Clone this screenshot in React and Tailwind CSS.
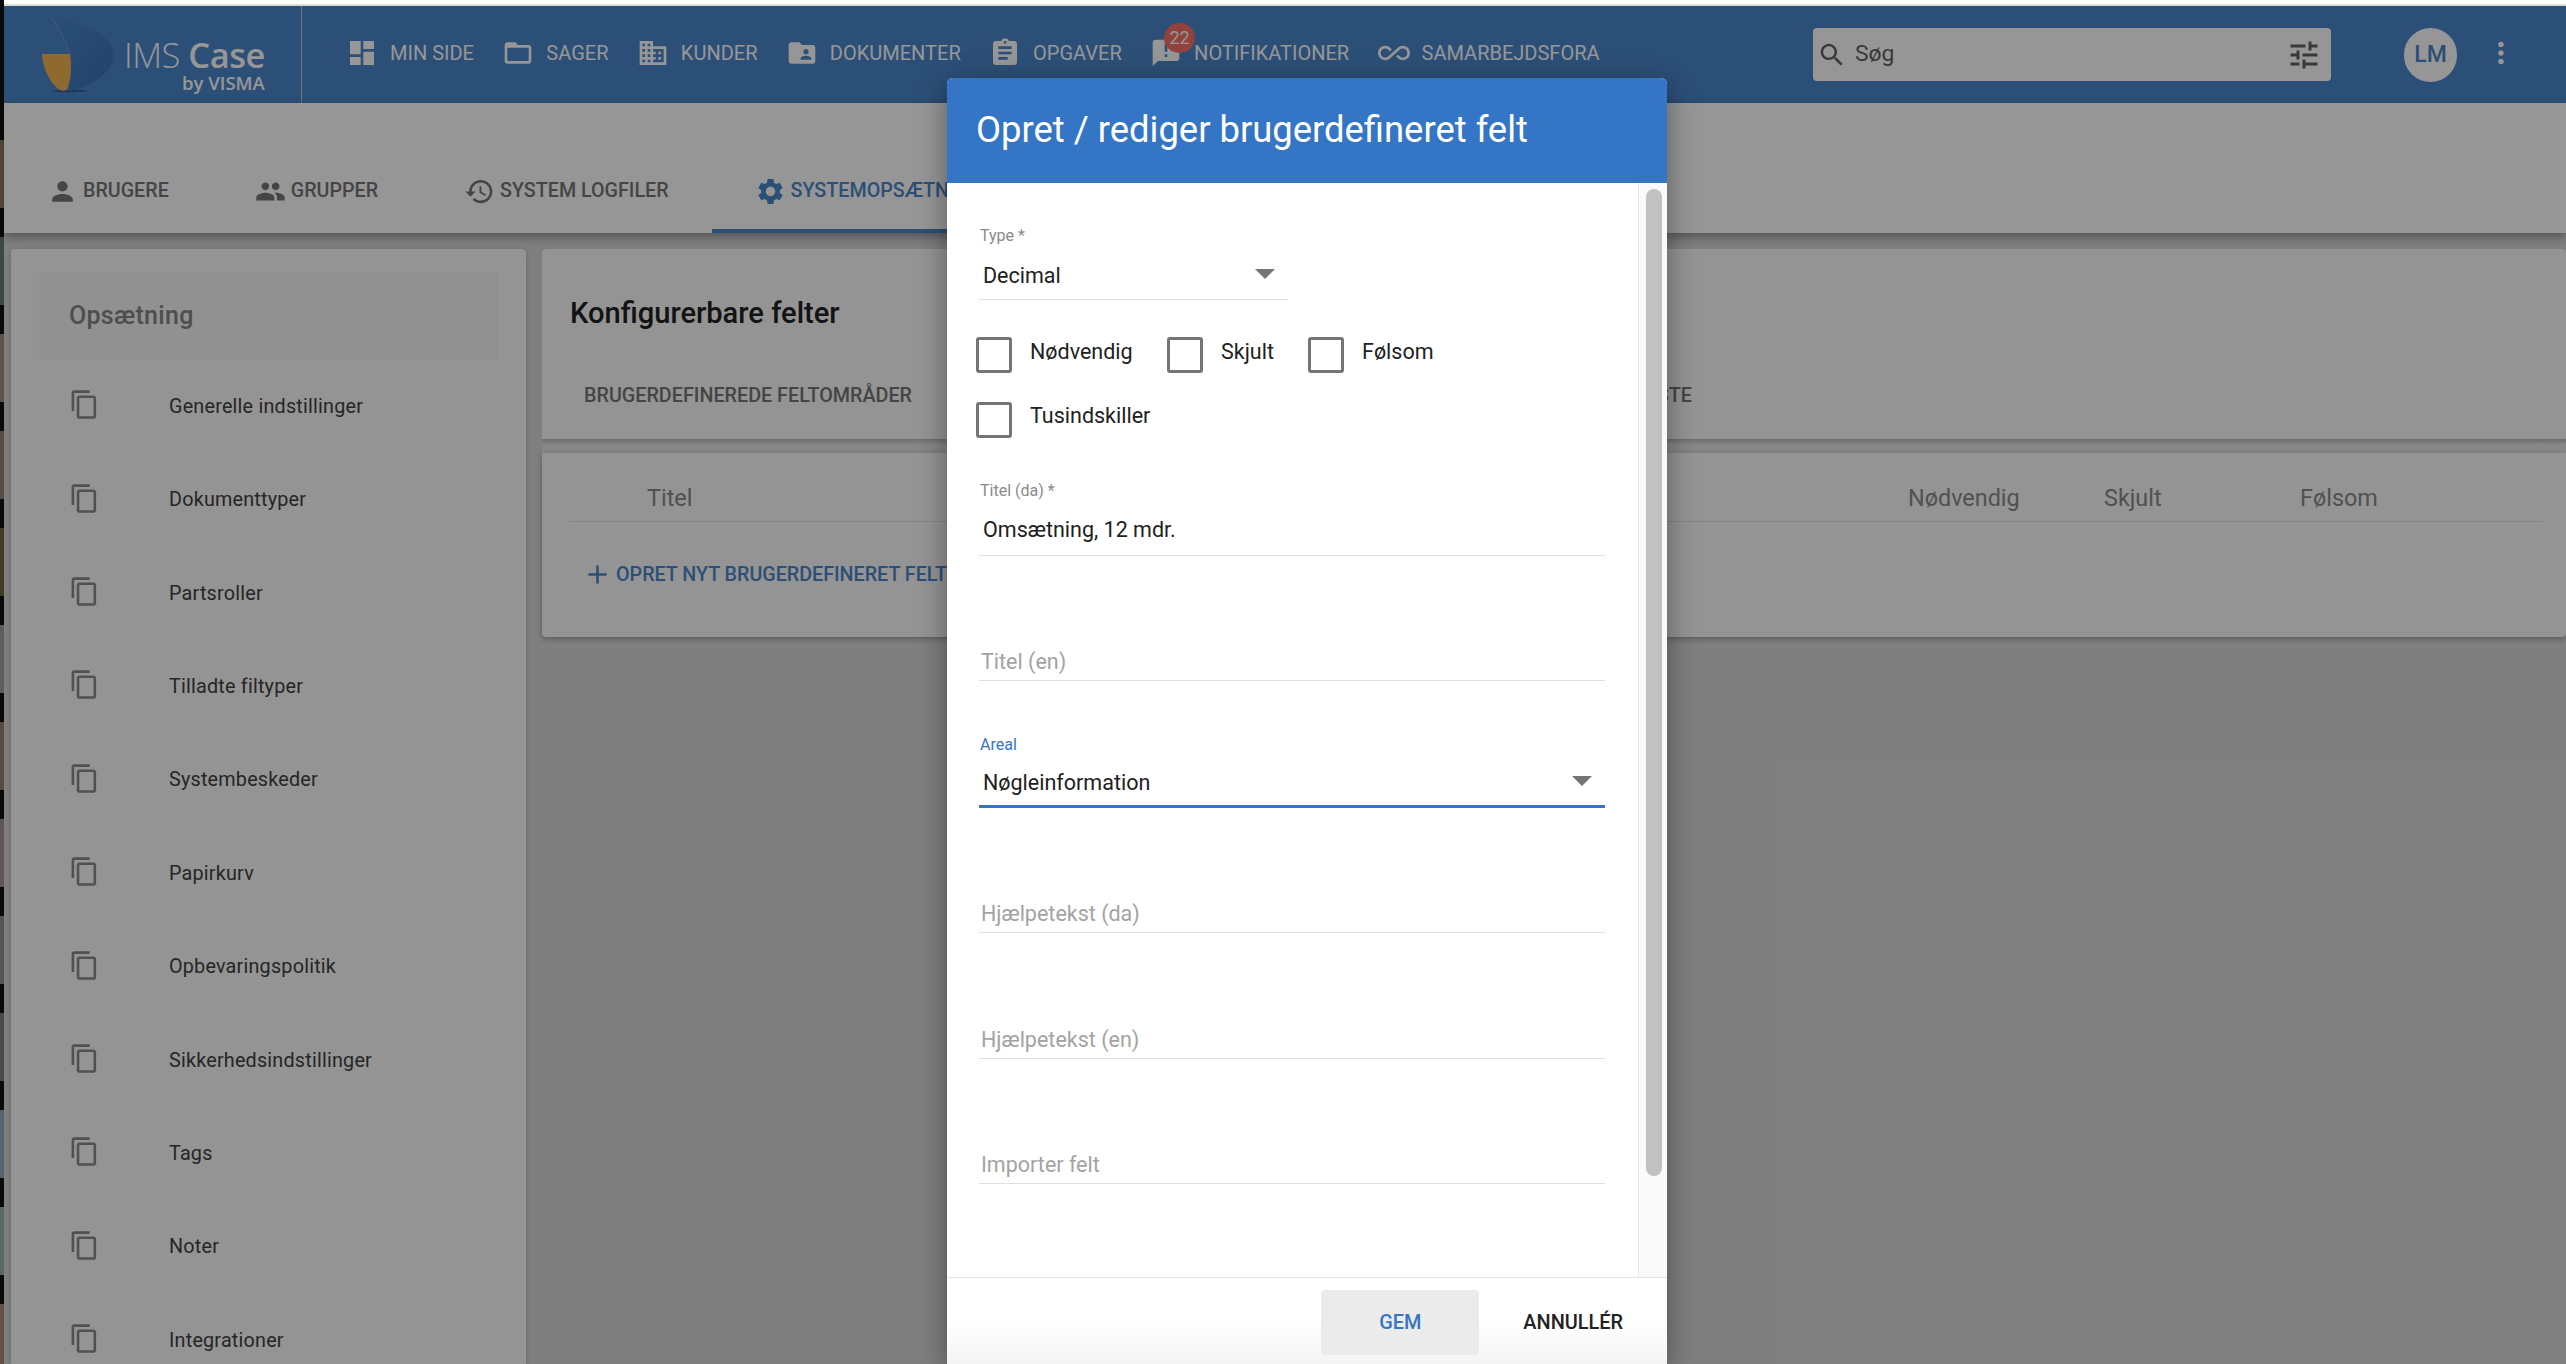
const P = {
  dashboard: "M3 13h8V3H3v10zm0 8h8v-6H3v6zm10 0h8V11h-8v10zm0-18v6h8V3h-8z",
  folder: "M20 6h-8l-2-2H4c-1.1 0-1.99.9-1.99 2L2 18c0 1.1.9 2 2 2h16c1.1 0 2-.9 2-2V8c0-1.1-.9-2-2-2zm0 12H4V8h16v10z",
  domain: "M12 7V3H2v18h20V7H12zM6 19H4v-2h2v2zm0-4H4v-2h2v2zm0-4H4V9h2v2zm0-4H4V5h2v2zm4 12H8v-2h2v2zm0-4H8v-2h2v2zm0-4H8V9h2v2zm0-4H8V5h2v2zm10 12h-8v-2h2v-2h-2v-2h2v-2h-2V9h8v10zm-2-8h-2v2h2v-2zm0 4h-2v2h2v-2z",
  shared: "M20 6h-8l-2-2H4c-1.1 0-1.99.9-1.99 2L2 18c0 1.1.9 2 2 2h16c1.1 0 2-.9 2-2V8c0-1.1-.9-2-2-2zm-5 3c1.1 0 2 .9 2 2s-.9 2-2 2-2-.9-2-2 .9-2 2-2zm4 8h-8v-1c0-1.33 2.67-2 4-2s4 .67 4 2v1z",
  assignment: "M19 3h-4.18C14.4 1.84 13.3 1 12 1c-1.3 0-2.4.84-2.82 2H5c-1.1 0-2 .9-2 2v14c0 1.1.9 2 2 2h14c1.1 0 2-.9 2-2V5c0-1.1-.9-2-2-2zm-7 0c.55 0 1 .45 1 1s-.45 1-1 1-1-.45-1-1 .45-1 1-1zm2 14H7v-2h7v2zm3-4H7v-2h10v2zm0-4H7V7h10v2z",
  announcement: "M20 2H4c-1.1 0-1.99.9-1.99 2L2 22l4-4h14c1.1 0 2-.9 2-2V4c0-1.1-.9-2-2-2zm-7 9h-2V5h2v6zm0 4h-2v-2h2v2z",
  infinity: "M18.6 6.62c-1.44 0-2.8.56-3.77 1.53L12 10.66 10.48 12h.01L7.8 14.39c-.64.64-1.49.99-2.4.99-1.87 0-3.39-1.51-3.39-3.38S3.53 8.62 5.4 8.62c.91 0 1.76.35 2.44 1.03l1.13 1 1.51-1.34L9.22 8.2C8.2 7.18 6.84 6.62 5.4 6.62 2.42 6.62 0 9.04 0 12s2.42 5.38 5.4 5.38c1.44 0 2.8-.56 3.77-1.53l2.83-2.5.01.01L13.52 12h-.01l2.69-2.39c.64-.64 1.49-.99 2.4-.99 1.87 0 3.39 1.51 3.39 3.38s-1.52 3.38-3.39 3.38c-.9 0-1.76-.35-2.44-1.03l-1.14-1.01-1.51 1.34 1.27 1.12c1.02 1.01 2.37 1.57 3.82 1.57 2.98 0 5.4-2.41 5.4-5.38s-2.42-5.37-5.4-5.37z",
  person: "M12 12c2.21 0 4-1.79 4-4s-1.79-4-4-4-4 1.79-4 4 1.79 4 4 4zm0 2c-2.67 0-8 1.34-8 4v2h16v-2c0-2.66-5.33-4-8-4z",
  people: "M16 11c1.66 0 2.99-1.34 2.99-3S17.66 5 16 5c-1.66 0-3 1.34-3 3s1.34 3 3 3zm-8 0c1.66 0 2.99-1.34 2.99-3S9.66 5 8 5C6.34 5 5 6.34 5 8s1.34 3 3 3zm0 2c-2.33 0-7 1.17-7 3.5V19h14v-2.5c0-2.33-4.67-3.5-7-3.5zm8 0c-.29 0-.62.02-.97.05 1.16.84 1.97 1.97 1.97 3.45V19h6v-2.5c0-2.33-4.67-3.5-7-3.5z",
  history: "M13 3c-4.97 0-9 4.03-9 9H1l3.89 3.89.07.14L9 12H6c0-3.87 3.13-7 7-7s7 3.13 7 7-3.13 7-7 7c-1.93 0-3.68-.79-4.94-2.06l-1.42 1.42C8.27 19.99 10.51 21 13 21c4.97 0 9-4.03 9-9s-4.03-9-9-9zm-1 5v5l4.28 2.54.72-1.21-3.5-2.08V8H12z",
  settings: "M19.14 12.94c.04-.3.06-.61.06-.94 0-.32-.02-.64-.07-.94l2.03-1.58c.18-.14.23-.41.12-.61l-1.92-3.32c-.12-.22-.37-.29-.59-.22l-2.39.96c-.5-.38-1.03-.7-1.62-.94l-.36-2.54c-.04-.24-.24-.41-.48-.41h-3.84c-.24 0-.43.17-.47.41l-.36 2.54c-.59.24-1.13.57-1.62.94l-2.39-.96c-.22-.08-.47 0-.59.22L2.74 8.87c-.12.21-.08.47.12.61l2.03 1.58c-.05.3-.09.63-.09.94s.02.64.07.94l-2.03 1.58c-.18.14-.23.41-.12.61l1.92 3.32c.12.22.37.29.59.22l2.39-.96c.5.38 1.03.7 1.62.94l.36 2.54c.05.24.24.41.48.41h3.84c.24 0 .44-.17.47-.41l.36-2.54c.59-.24 1.13-.56 1.62-.94l2.39.96c.22.08.47 0 .59-.22l1.92-3.32c.12-.22.07-.47-.12-.61l-2.01-1.58zM12 15.6c-1.98 0-3.6-1.62-3.6-3.6s1.62-3.6 3.6-3.6 3.6 1.62 3.6 3.6-1.62 3.6-3.6 3.6z",
  search: "M15.5 14h-.79l-.28-.27C15.41 12.59 16 11.11 16 9.5 16 5.91 13.09 3 9.5 3S3 5.91 3 9.5 5.91 16 9.5 16c1.61 0 3.09-.59 4.23-1.57l.27.28v.79l5 4.99L20.49 19l-4.99-5zm-6 0C7.01 14 5 11.99 5 9.5S7.01 5 9.5 5 14 7.01 14 9.5 11.99 14 9.5 14z",
  tune: "M3 17v2h6v-2H3zM3 5v2h10V5H3zm10 16v-2h8v-2h-8v-2h-2v6h2zM7 9v2H3v2h4v2h2V9H7zm14 4v-2H11v2h10zm-6-4h2V7h4V5h-4V3h-2v6z",
  copy: "M16 1H4c-1.1 0-2 .9-2 2v14h2V3h12V1zm3 4H8c-1.1 0-2 .9-2 2v14c0 1.1.9 2 2 2h11c1.1 0 2-.9 2-2V7c0-1.1-.9-2-2-2zm0 16H8V7h11v14z",
  more: "M12 8c1.1 0 2-.9 2-2s-.9-2-2-2-2 .9-2 2 .9 2 2 2zm0 2c-1.1 0-2 .9-2 2s.9 2 2 2 2-.9 2-2-.9-2-2-2zm0 6c-1.1 0-2 .9-2 2s.9 2 2 2 2-.9 2-2-.9-2-2-2z",
  add: "M19 13h-6v6h-2v-6H5v-2h6V5h2v6h6v2z",
};

function Icon({ d, className }) {
  return (
    <svg viewBox="0 0 24 24" className={className} fill="currentColor" aria-hidden="true">
      <path d={d} />
    </svg>
  );
}

function Caret() {
  return (
    <svg viewBox="7 10 10 5" className="w-[20px] h-[10px] mb-[5px] text-[#757575]" fill="currentColor" aria-hidden="true">
      <path d="M7 10l5 5 5-5z" />
    </svg>
  );
}

const NAV = [
  ["MIN SIDE", P.dashboard],
  ["SAGER", P.folder],
  ["KUNDER", P.domain],
  ["DOKUMENTER", P.shared],
  ["OPGAVER", P.assignment],
  ["NOTIFIKATIONER", P.announcement, "22"],
  ["SAMARBEJDSFORA", P.infinity],
];

const TABS = [
  ["BRUGERE", P.person],
  ["GRUPPER", P.people],
  ["SYSTEM LOGFILER", P.history],
  ["SYSTEMOPSÆTNING", P.settings, true],
];

const MENU = [
  "Generelle indstillinger",
  "Dokumenttyper",
  "Partsroller",
  "Tilladte filtyper",
  "Systembeskeder",
  "Papirkurv",
  "Opbevaringspolitik",
  "Sikkerhedsindstillinger",
  "Tags",
  "Noter",
  "Integrationer",
];

const STRIP = ["#5a4d3f", "#3f464a", "#5f544e", "#564c45", "#403a26", "#5e5e5e", "#564c45", "#5f5555", "#555555", "#4a4a4a", "#56646e", "#566a60", "#644f45"];

function DesktopEdge() {
  return (
    <div className="w-[4px] shrink-0 bg-[#0a0a0a] pt-[140px] flex flex-col gap-[29px] overflow-hidden">
      {STRIP.map((c, i) => (
        <div key={i} className="h-[68px] shrink-0" style={{ backgroundColor: c }} />
      ))}
    </div>
  );
}

function Logo() {
  return (
    <div className="w-[298px] h-full border-r border-[#b9c9dc] flex items-start shrink-0">
      <svg viewBox="0 0 78 78" className="w-[78px] h-[78px] ml-[36px] mt-[10px] shrink-0" aria-hidden="true">
        <defs>
          <linearGradient id="logoBlue" x1="0" y1="0" x2="1" y2="1">
            <stop offset="0" stopColor="#4b86cb" />
            <stop offset="1" stopColor="#3a74b6" />
          </linearGradient>
        </defs>
        <ellipse cx="30" cy="75" rx="18" ry="1.2" fill="#2d5c92" />
        <path d="M12 2C45 6 64 16 71 30 76 42 72 52 62 60 52 68 40 74 28 75 30 62 32 50 30 38 26 24 18 12 12 2Z" fill="url(#logoBlue)" />
        <path d="M12 2C18 12 26 24 30 38" stroke="#79a9dc" strokeWidth="0.8" fill="none" />
        <path d="M2 38H30C32 50 31 64 27 74 24 75 22 75 20 74 10 68 2 50 2 38Z" fill="#f2b450" />
      </svg>
      <div className="flex flex-col items-end ml-[6px] text-white font-['Open_Sans',sans-serif]">
        <div className="h-[34px] mt-[32px] text-[34.5px] leading-[34px] whitespace-nowrap tracking-[-0.5px]">
          <span className="font-light">IMS </span>
          <span className="font-semibold">Case</span>
        </div>
        <div className="text-[18.5px] leading-[22px] font-semibold whitespace-nowrap">by VISMA</div>
      </div>
    </div>
  );
}

function Header() {
  return (
    <header className="h-[97px] bg-[#4b86cb] flex items-stretch shrink-0 text-white">
      <Logo />
      <nav className="flex items-center gap-[28.4px] pl-[44px] pb-[4px] w-[1511px] shrink-0">
        {NAV.map(([t, d, badge]) => (
          <div key={t} className="relative flex items-center gap-[12px] text-[20px] whitespace-nowrap">
            <Icon d={d} className="w-[32px] h-[32px] shrink-0" />
            <span>{t}</span>
            {badge && (
              <span className="absolute left-[14px] top-[-14px] w-[31px] h-[30px] rounded-full bg-[#f87068] text-[18px] flex items-center justify-center">
                {badge}
              </span>
            )}
          </div>
        ))}
      </nav>
      <div className="w-[518px] h-[53px] mt-[22px] bg-white rounded-[4px] flex items-center shrink-0 text-[#616161] pl-[4px] pr-[9px]">
        <Icon d={P.search} className="w-[30px] h-[30px] shrink-0" />
        <span className="ml-[8px] text-[22.9px] flex-1">Søg</span>
        <Icon d={P.tune} className="w-[36px] h-[36px] shrink-0" />
      </div>
      <div className="w-[53px] h-[54px] mt-[22px] ml-[73px] rounded-full bg-white flex items-center justify-center text-[#4b86cb] text-[23px] font-medium shrink-0">
        LM
      </div>
      <Icon d={P.more} className="w-[34px] h-[34px] mt-[30px] ml-[27px] shrink-0" />
    </header>
  );
}

function TabBar() {
  return (
    <div className="h-[130px] bg-white shrink-0 flex items-end relative z-10 shadow-[0_4px_10px_rgba(0,0,0,0.35)] text-[#757575]">
      {TABS.map(([t, d, active]) => (
        <div
          key={t}
          className={`h-[76px] px-[43px] flex items-center gap-[5px] text-[19.7px] font-medium whitespace-nowrap ${active ? "border-b-[4px] border-[#4b86cb] pb-[4px] text-[#4b86cb]" : "pb-[8px]"}`}
        >
          <Icon d={d} className="w-[31px] h-[31px] shrink-0" />
          <span>{t}</span>
        </div>
      ))}
    </div>
  );
}

function Sidebar() {
  return (
    <aside className="w-[515px] h-[1115px] shrink-0 bg-[#fbfbfb] rounded-t-[4px] pt-[23px] px-[28px] overflow-hidden shadow-[0_2px_6px_rgba(0,0,0,0.2)]">
      <div className="h-[88px] bg-[#f6f6f6] pl-[30px] flex items-center text-[25px] font-medium text-[#858585] tracking-[0.3px]">
        Opsætning
      </div>
      {MENU.map((m) => (
        <div key={m} className="h-[93.4px] flex items-center text-[19.8px] tracking-[0.2px] text-[#424242]">
          <Icon d={P.copy} className="w-[31px] h-[31px] ml-[30px] mb-[4px] text-[#8a8a8a] shrink-0" />
          <span className="ml-[69px]">{m}</span>
        </div>
      ))}
    </aside>
  );
}

function Content() {
  return (
    <section className="flex-1 min-w-0 flex flex-col">
      <div className="h-[190px] bg-[#fbfbfb] rounded-t-[4px] shrink-0">
        <h2 className="pl-[28px] pt-[46px] text-[29.1px] leading-[36px] font-medium text-[#212121]">Konfigurerbare felter</h2>
        <div className="flex items-center justify-between w-[1150px] h-[30px] mt-[50px] pl-[42px] text-[19.75px] font-medium text-[#757575] whitespace-nowrap">
          <span>BRUGERDEFINEREDE FELTOMRÅDER</span>
          <span>FELTER OG LISTE</span>
        </div>
      </div>
      <div className="h-[14px] shrink-0 bg-linear-to-b from-[#b8b8b8] via-[#e4e4e4] via-40% to-[#e8e8e8]" />
      <div className="h-[184px] bg-[#fbfbfb] rounded-b-[4px] shadow-[0_2px_6px_rgba(0,0,0,0.3)] px-[28px] shrink-0">
        <div className="h-[69px] border-b border-[#e0e0e0] grid grid-cols-[1261px_196px_196px_1fr] items-center text-[23.4px] text-[#8a8a8a] pl-[77px] mr-[-4px] pt-[23px]">
          <span>Titel</span>
          <span>Nødvendig</span>
          <span>Skjult</span>
          <span>Følsom</span>
        </div>
        <div className="flex items-center mt-[37px] ml-[12px] gap-[3px] text-[#4b86cb] text-[19.7px] font-medium whitespace-nowrap">
          <Icon d={P.add} className="w-[31px] h-[31px] shrink-0" />
          <span>OPRET NYT BRUGERDEFINERET FELT</span>
        </div>
      </div>
    </section>
  );
}

function Check({ label, lift }) {
  return (
    <div className="flex items-start">
      <span className="w-[36px] h-[36px] border-[3px] border-[#757575] rounded-[3px] shrink-0" />
      <span className={`ml-[18px] text-[21.5px] leading-[30px] text-[#212121] whitespace-nowrap ${lift ? "-mt-[1px]" : ""}`}>{label}</span>
    </div>
  );
}

function Blank({ label, mt }) {
  return (
    <div className={`${mt} h-[38px] pt-[1px] border-b-[1.5px] border-[#e0e0e0] flex items-center pl-[2px] text-[21.5px] text-[#a3a3a3]`}>
      {label}
    </div>
  );
}

function Modal() {
  return (
    <div className="absolute z-30 left-[947px] top-[78px] w-[720px] h-[1286px] rounded-t-[6px] overflow-hidden flex flex-col bg-white shadow-[0_8px_30px_rgba(0,0,0,0.4)]">
      <div className="h-[105px] shrink-0 bg-[#3575c5] flex items-center pl-[29px] text-[36.4px] text-white whitespace-nowrap">
        Opret / rediger brugerdefineret felt
      </div>
      <div className="flex-1 min-h-0 flex">
        <form className="flex-1 min-w-0 pl-[32px] pr-[33px] pt-[44px]">
          <div className="w-[309px]">
            <div className="h-[18px] pl-[1px] text-[16px] leading-[18px] text-[#8a8a8a]">Type *</div>
            <div className="h-[55px] pt-[9px] border-b-[1.5px] border-[#e0e0e0] flex items-center justify-between pl-[4px] pr-[13px] text-[21.5px] text-[#212121]">
              <span>Decimal</span>
              <Caret />
            </div>
          </div>
          <div className="mt-[37px] -ml-[3px] flex">
            <div className="w-[191px]"><Check label="Nødvendig" /></div>
            <div className="w-[141px]"><Check label="Skjult" /></div>
            <Check label="Følsom" />
          </div>
          <div className="mt-[29px] -ml-[3px]"><Check label="Tusindskiller" lift /></div>

          <div className="mt-[44px] h-[18px] pl-[1px] text-[16px] leading-[18px] text-[#8a8a8a]">Titel (da) *</div>
          <div className="h-[56px] pt-[5px] border-b-[1.5px] border-[#e0e0e0] flex items-center pl-[4px] text-[21.5px] text-[#212121]">
            Omsætning, 12 mdr.
          </div>

          <Blank label="Titel (en)" mt="mt-[87px]" />

          <div className="mt-[55px] h-[18px] pl-[1px] text-[16px] leading-[18px] text-[#3575c5]">Areal</div>
          <div className="h-[54px] pt-[8px] border-b-[3px] border-[#3575c5] flex items-center justify-between pl-[4px] pr-[13px] text-[21.5px] text-[#212121]">
            <span>Nøgleinformation</span>
            <Caret />
          </div>

          <Blank label="Hjælpetekst (da)" mt="mt-[87px]" />
          <Blank label="Hjælpetekst (en)" mt="mt-[88px]" />
          <Blank label="Importer felt" mt="mt-[87px]" />
        </form>
        <div className="w-[29px] shrink-0 border-l-[1.5px] border-[#e8e8e8] bg-[#fafafa] pl-[7px] pt-[6px]">
          <div className="w-[16px] h-[987px] bg-[#c1c1c1] rounded-[8px]" />
        </div>
      </div>
      <div className="h-[87px] shrink-0 pt-[3px] border-t-[1.5px] border-[#e3e3e3] flex items-center justify-end pr-[44px] gap-[44px] bg-linear-to-b from-white from-50% to-[#f4f4f4] text-[19.9px] font-medium">
        <div className="w-[158px] h-[65px] rounded-[4px] bg-[#ebebeb] flex items-center justify-center text-[#3575c5]">GEM</div>
        <div className="text-[#212121]">ANNULLÉR</div>
      </div>
    </div>
  );
}

export default function App() {
  return (
    <div className="relative w-[2566px] h-[1364px] overflow-hidden flex bg-black font-['Roboto',sans-serif]">
      <DesktopEdge />
      <div className="flex-1 min-w-0 flex flex-col bg-[#d9d9d9] relative">
        <div className="h-[4px] bg-white shrink-0" />
        <div className="h-[2px] bg-[#dcdcdc] shrink-0" />
        <Header />
        <TabBar />
        <main className="flex-1 min-h-0 flex gap-[16px] pl-[7px] pt-[16px] items-start">
          <Sidebar />
          <Content />
        </main>
        <div className="absolute inset-0 top-[6px] z-20 bg-black/41" />
      </div>
      <Modal />
    </div>
  );
}
